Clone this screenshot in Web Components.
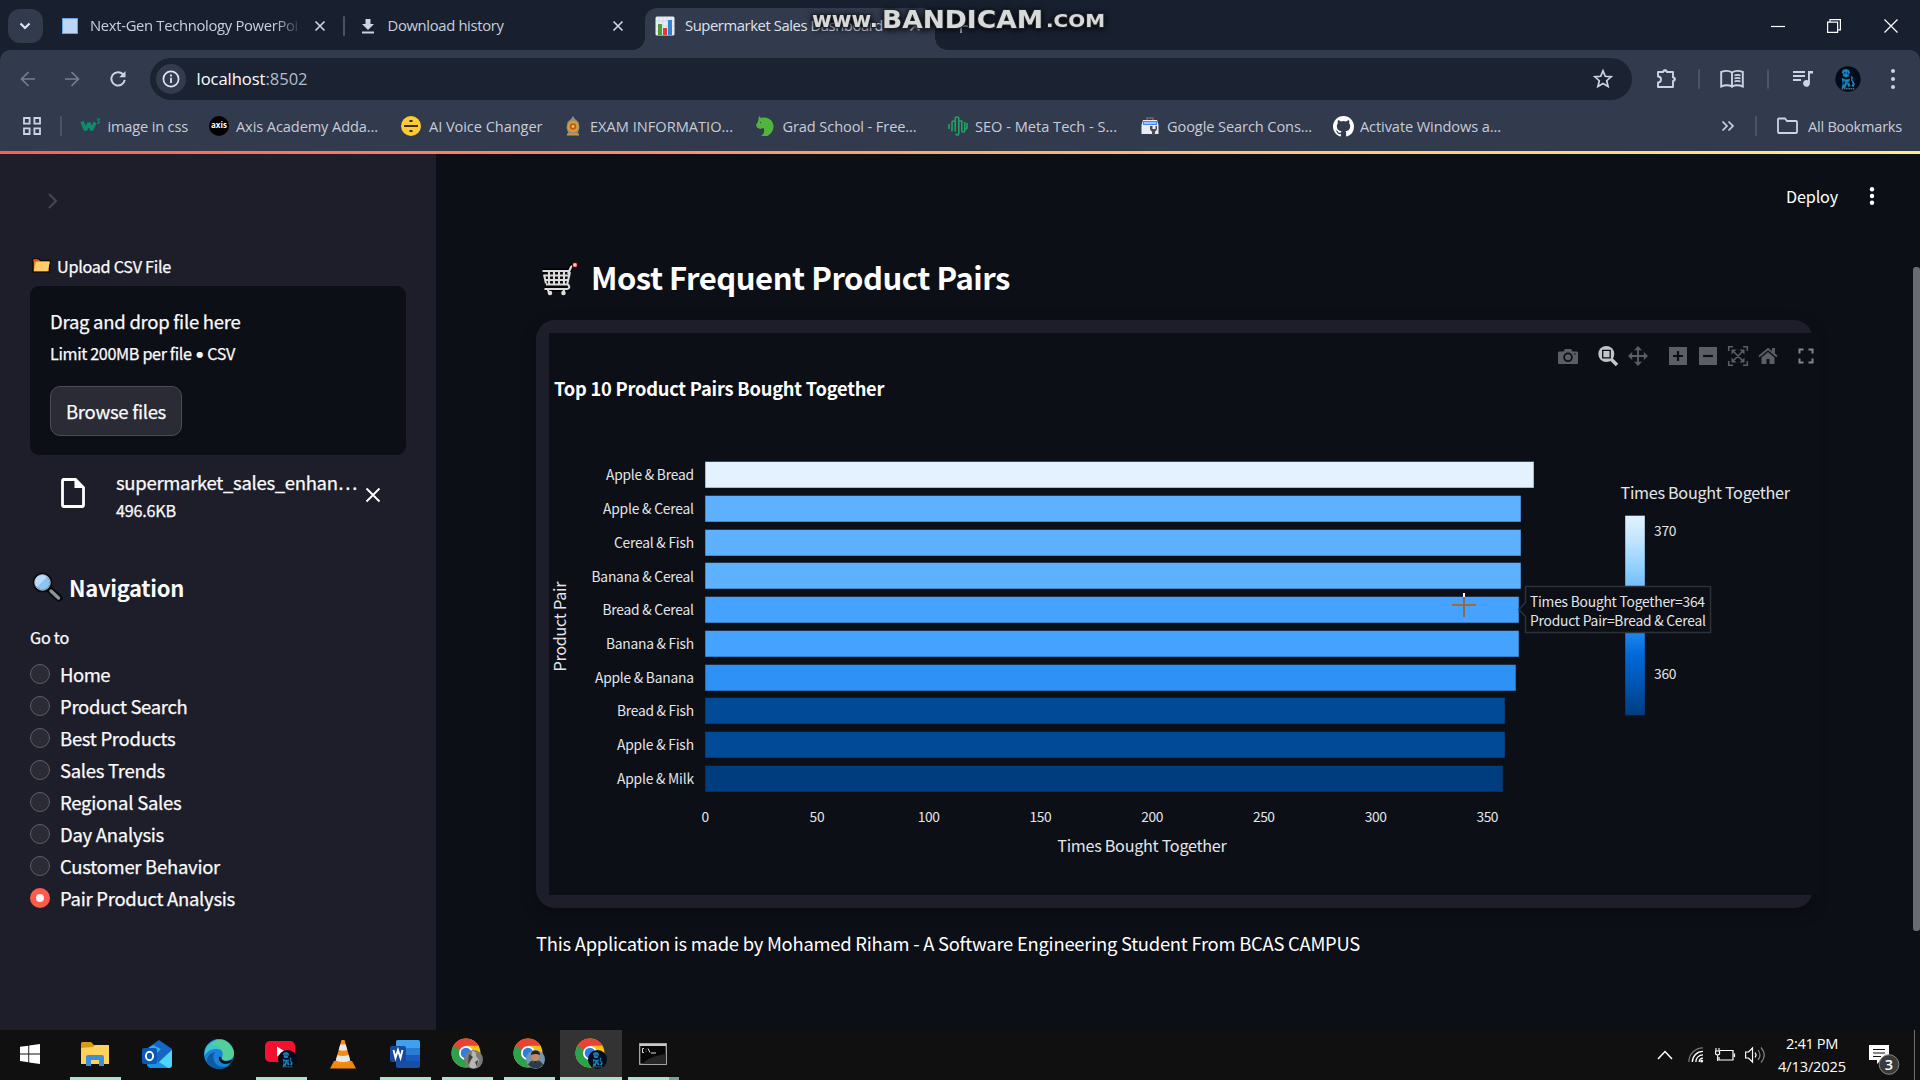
<!DOCTYPE html>
<html lang="en">
<head>
<meta charset="utf-8">
<title>Supermarket Sales Dashboard</title>
<style>
html,body{margin:0;height:100%;background:#0c0f16;overflow:hidden}
</style>
</head>
<body>
<desktop-screen></desktop-screen>
<script>
const SRC = '"Noto Sans CJK SC","Noto Sans",sans-serif';
const SEG = '"Open Sans","Noto Sans",sans-serif';

/* Icons: [width, height, markup] */
const lion = (x, y, r) => `<g transform="translate(${x} ${y}) scale(${r / 12})"><circle r="12" fill="#030c18"/><path d="M-5-8.500l3-1 3 1 1 3-1.500 1 .5 2-3 1-3-1.500.5-2-1.500-1zM-6-1l4 1.500L2 0l-1 3 1.500 3.500-2 1-1.500-3-1.500 4H-6l1-4zM3-3l2 1.500-.5 3 2 3-1 3-2.500-1 1.500-2-1.500-3z" fill="#1583c2"/><path d="M-4-6.500l2 .5-1 1.500zM-1-7l1.500 2-1.500.500zM-4 1.500l1.500 1-1 3-1-.5zM0 2l1 1.500-1.500.500zM4-1l.8 2-1 .5z" fill="#05213b"/><path d="M-6 9.300H6" stroke="#8aa3b5" stroke-width=".9" stroke-dasharray="1.500 .6"/></g>`;
const chrome = `<circle cx="15" cy="15" r="14.500" fill="#fbc116"/><path d="M15 15L2.400 7.800A14.500 14.500 0 0 1 27.600 7.800H15z" fill="#ea4335"/><path d="M2.400 7.800A14.500 14.500 0 0 0 15 29.500l6.200-10.900L15 15z" fill="#2ba24c"/><path d="M2.400 7.800l6.400 10.800L15 15 15 7.800z" fill="#ea4335"/><path d="M2.400 7.800L8.800 18.600 15 15z" fill="#2ba24c"/><circle cx="15" cy="15" r="7" fill="#fff"/><circle cx="15" cy="15" r="5.300" fill="#2f7de1"/>`;
const ICONS = {
 tabchev:[34,34,`<path d="M12.500 14.500l4.500 4.500 4.500-4.500" fill="none" stroke="#e1e5ee" stroke-width="2.200"/>`],
 page:[16,16,`<rect x=".5" y=".5" width="15" height="15" fill="#bcd7f5" stroke="#6ba3e0"/>`],
 x:[12,12,`<path d="M1.500 1.500l9 9m0-9l-9 9" stroke="#cdd3df" stroke-width="1.700"/>`],
 download:[14,16,`<path d="M4.500 1h5v5H13L7 12 1 6h3.500z" fill="#ccd3e3"/><path d="M1 14.500h12" stroke="#ccd3e3" stroke-width="2"/>`],
 chart:[20,20,`<rect x=".5" y=".5" width="19" height="19" rx="1.500" fill="#e9eef2"/><path d="M4 1v18M8 1v18M12 1v18M16 1v18M1 5h18M1 10h18M1 15h18" stroke="#c6d2db" stroke-width=".6"/><path d="M3 8h4v11H3z" fill="#4e9a3b"/><path d="M8 12h4v7H8z" fill="#d93a3a"/><path d="M13 4h4v15h-4z" fill="#3184cf"/>`],
 plus:[14,14,`<path d="M7 0v14M0 7h14" stroke="#aab1bf" stroke-width="1.800"/>`],
 min:[14,14,`<path d="M0 7.500h14" stroke="#fff" stroke-width="1.200"/>`],
 restore:[14,14,`<path d="M.6 3.100h10v10.300H.6zM3 3V.6h10.400v10.300H11" fill="none" stroke="#fff" stroke-width="1.200"/>`],
 close:[14,14,`<path d="M.5.5l13 13m0-13l-13 13" stroke="#fff" stroke-width="1.200"/>`],
 back:[18,18,`<path d="M16 9H3m6.500-7L2.500 9l7 7" fill="none" stroke="#767d90" stroke-width="1.700"/>`],
 fwd:[18,18,`<path d="M2 9h13M8.500 2l7 7-7 7" fill="none" stroke="#767d90" stroke-width="1.700"/>`],
 reload:[18,18,`<path d="M15.700 9.800A6.700 6.700 0 1 1 14 4.300L15.500 6" fill="none" stroke="#ccd3e3" stroke-width="2"/><path d="M16.500 1v6.300H10.200z" fill="#ccd3e3"/>`],
 info:[30,30,`<circle cx="15" cy="15" r="15" fill="#333b4e"/><circle cx="15" cy="15" r="7.600" fill="none" stroke="#dfe4ee" stroke-width="1.700"/><path d="M15 13.800v5.200M15 10.500v2" stroke="#dfe4ee" stroke-width="1.800"/>`],
 star:[20,20,`<path d="M10 1.800l2.300 5.500 5.900.5-4.500 3.900 1.400 5.800L10 14.400l-5.100 3.100 1.400-5.800L1.800 7.800l5.900-.5z" fill="none" stroke="#ccd3e3" stroke-width="1.700"/>`],
 ext:[22,22,`<path d="M3 4h5.200a1.800 1.800 0 0 1 3.600 0H18v5.400a1.800 1.800 0 0 1 0 3.600v6H3v-4.500a3 3 0 0 0 0-6z" fill="none" stroke="#ccd3e3" stroke-width="1.900" stroke-linejoin="round"/><path d="M8 3.500a2 2 0 0 1 4 0zM18.500 9.200a2 2 0 0 1 0 4z" fill="#ccd3e3"/>`],
 book:[24,20,`<path d="M12 17.500C9 16 5 16 1.200 17.500V3C5 1.500 9 1.500 12 3.500zM12 17.500C15 16 19 16 22.800 17.500V3C19 1.500 15 1.500 12 3.500z" fill="none" stroke="#ccd3e3" stroke-width="1.900"/><path d="M14.500 6.500c2-.8 4-.8 6 0M14.500 9.500c2-.8 4-.8 6 0M14.500 12.500c2-.8 4-.8 6 0" fill="none" stroke="#ccd3e3" stroke-width="1.700"/>`],
 music:[20,18,`<path d="M0 2h12M0 6h12M0 10h8" stroke="#ccd3e3" stroke-width="1.900"/><path d="M20 1h-5v9.300a3.400 3.400 0 1 0 1.900 3V3.500H20z" fill="#ccd3e3"/>`],
 avatar:[26,30,lion(13,15,12.7)],
 dots:[6,22,`<g fill="#ccd3e3"><circle cx="3" cy="3" r="2"/><circle cx="3" cy="11" r="2"/><circle cx="3" cy="19" r="2"/></g>`],
 ddots:[6,22,`<g fill="#fff"><circle cx="3" cy="4.200" r="2.200"/><circle cx="3" cy="11" r="2.200"/><circle cx="3" cy="17.800" r="2.200"/></g>`],
 grid:[18,18,`<path d="M1 1h5.600v5.600H1zM11.400 1H17v5.600h-5.600zM1 11.400h5.600V17H1zM11.400 11.400H17V17h-5.600z" fill="none" stroke="#ccd3e3" stroke-width="1.800"/>`],
 w3:[22,18,`<path d="M2 4.500l3.500 8.500 3.500-7 2.500 7 3.500-7.500" fill="none" stroke="#0c8f68" stroke-width="3.400" stroke-linejoin="bevel"/><path d="M17 2h2.600l-1.500 2c2.100.2 1.900 2.800-1.100 2.300" fill="none" stroke="#0c8f68" stroke-width="1.100"/>`],
 ai:[20,20,`<circle cx="10" cy="10" r="10" fill="#fdcb35"/><path d="M3 10h14M8.500 5h3M8.500 15h3" stroke="#3a2d12" stroke-width="2"/>`],
 exam:[18,20,`<path d="M9 0l2 3 3.500 3 1 6-2 6h-9l-2-6 1-6L7 3z" fill="#8d8f83"/><circle cx="9" cy="10.500" r="5.500" fill="#d9a12c"/><circle cx="9" cy="10.500" r="3.300" fill="#c4571d"/><circle cx="9" cy="10.500" r="1.400" fill="#f1c84a"/><path d="M3 18.500h12" stroke="#c99b38" stroke-width="2"/>`],
 horse:[18,20,`<path d="M3 0l2 2c8-2 13 4 12.500 9-.3 4-2.500 7-6 9H5c3-2 4-5 2.500-8L4 13l-3-1.500L0 9l2-3.500z" fill="#52b43c"/><path d="M4 6l1.500.500L4 7.500z" fill="#1d4a18"/>`],
 seo:[20,20,`<path d="M1 8v5M4 6.500v9M4 6.500q0-1.500 1.600-1.500T7.200 6.500v9M7.200 6V2.500Q7.200 1 9 1t1.800 1.500v15q0 1.500-1.500 1.500T7.800 17.500M10.800 5h3v9.500q0 1.500 1.500 1.500t1.500-1.500V6M19 7v5q0 1-1.500 1.200" fill="none" stroke="#1fa463" stroke-width="1.600"/>`],
 gsc:[18,18,`<path d="M6 3V1h6v2" fill="none" stroke="#676c74" stroke-width="1.600"/><path d="M2 3h14l1.500 5v9H.5V8z" fill="#e9ecf0"/><path d="M2 4h14v4H2z" fill="#4285f4"/><path d="M3 6h12" stroke="#fff" stroke-width="1"/><path d="M9 9v3a3 3 0 0 0 2 2.500V18h3v-3.500A3 3 0 0 0 16 12V9h-1.500v3h-3V9z" fill="#4a4d52"/>`],
 github:[21,21,`<path transform="scale(1.3125)" d="M8 0C3.580 0 0 3.580 0 8c0 3.540 2.290 6.530 5.470 7.590.4.070.55-.17.55-.38 0-.19-.01-.82-.01-1.490-2.010.37-2.530-.49-2.690-.94-.09-.23-.48-.94-.82-1.130-.28-.15-.68-.52-.01-.53.63-.01 1.080.58 1.230.82.72 1.210 1.870.87 2.330.66.07-.52.28-.87.51-1.070-1.780-.2-3.640-.89-3.640-3.950 0-.87.31-1.590.82-2.150-.08-.2-.36-1.020.08-2.120 0 0 .67-.21 2.200.82a7.700 7.700 0 0 1 4 0c1.530-1.040 2.200-.82 2.200-.82.44 1.100.16 1.920.08 2.120.51.56.82 1.270.82 2.150 0 3.070-1.870 3.750-3.650 3.950.29.25.54.73.54 1.480 0 1.070-.01 1.930-.01 2.200 0 .21.15.46.55.38A8 8 0 0 0 16 8c0-4.420-3.580-8-8-8z" fill="#fff"/>`],
 more:[14,12,`<path d="M1.500 1.500L6 6l-4.500 4.500M7.500 1.500L12 6l-4.500 4.500" fill="none" stroke="#ccd3e3" stroke-width="1.700"/>`],
 folder:[21,18,`<path d="M1 2.500q0-1 1-1h6l2 2.500h9q1 0 1 1v10q0 1-1 1H2q-1 0-1-1z" fill="none" stroke="#ccd3e3" stroke-width="1.800"/>`],
 sidechev:[10,16,`<path d="M1 1l7 7-7 7" fill="none" stroke="#454651" stroke-width="2"/>`],
 emofolder:[20,16,`<path d="M1 1h6l1.500 1.500H18L17.500 14H1z" fill="#e68a1b" stroke="#110c05" stroke-width="1.500"/><path d="M1.300 1.300h4.500L7 3.500H1.300z" fill="#e8541d"/><path d="M4 3.800h14l-2.500 9.500H1.700z" fill="#ffce6b"/>`],
 file:[24,30,`<path d="M2 1.500h12.500l8 8V27q0 1.500-1.500 1.500H3q-1.500 0-1.500-1.500V3Q1.500 1.500 3 1.500z" fill="none" stroke="#fff" stroke-width="2.800"/><path d="M13.500 1.500v8.500h9z" fill="#fff"/>`],
 bigx:[16,16,`<path d="M1.500 1.500l13 13m0-13l-13 13" stroke="#fff" stroke-width="1.900"/>`],
 lens:[30,30,`<path d="M16 16l10 9" stroke="#07080c" stroke-width="7" stroke-linecap="round"/><path d="M18 18l7.500 7" stroke="#8b959a" stroke-width="3.500" stroke-linecap="round"/><circle cx="9.500" cy="9.500" r="8.500" fill="#8cc4f5" stroke="#07080c" stroke-width="2.600"/><circle cx="9.500" cy="9.500" r="7.700" fill="none" stroke="#cfe6f8" stroke-width="1"/><path d="M4 14L14 4a7 7 0 0 0-10 10z" fill="#b9dcfa"/>`],
 cart:[40,40,`<g fill="none" stroke="#000" stroke-width="5"><path d="M3 11h26l4-7M5 13l4 14M9 24h19M5 29h25M10 30v4m14-4v4"/></g><path d="M3.500 11.500h26.500L27 24H8z" fill="#0a0a0c"/><path d="M2.500 11H30M4 14.500l2 9M9 11v13M14 11v13M19 11v13M24 11v13M5 15.500h24M6 20h22M6 24.500h21M28 24.500q3 4-1 4.500H4.500M7.500 28.500L9 33M24.500 28.500L23 33M30 12l-3 13M28 14l3-7 3.500-2.500" fill="none" stroke="#dcdcdc" stroke-width="2.100"/><circle cx="10" cy="33" r="2.300" fill="#ddd"/><circle cx="23.500" cy="33" r="2.300" fill="#ddd"/><circle cx="35" cy="5" r="2.800" fill="#f0705a" stroke="#300" stroke-width="1"/><circle cx="34.800" cy="4.800" r="1.500" fill="#f6c6bb"/>`],
 camera:[20,16,`<path d="M1 3.500h4.500L7 1h6l1.500 2.500H19a1 1 0 0 1 1 1V15a1 1 0 0 1-1 1H1a1 1 0 0 1-1-1V4.500a1 1 0 0 1 1-1z" fill="#5c5e65"/><circle cx="10" cy="9.300" r="3.900" fill="none" stroke="#0c0f16" stroke-width="1.800"/><circle cx="17" cy="6" r=".8" fill="#0c0f16"/>`],
 mzoom:[20,20,`<circle cx="8.300" cy="8" r="8" fill="#c4c5c8"/><path d="M13 13l6 6" stroke="#c4c5c8" stroke-width="3.600"/><path d="M4.700 4.300h7.500v7.500H4.700z" fill="#c4c5c8" stroke="#0c0f16" stroke-width="1.300"/>`],
 pan:[20,20,`<path d="M10 2v16M2 10h16" stroke="#5c5e65" stroke-width="1.900"/><path d="M10 0l4 4.200H6zM10 20l4-4.200H6zM0 10l4.200-4v8zM20 10l-4.200-4v8z" fill="#5c5e65"/>`],
 zin:[18,18,`<path d="M0 0h18v18H0z" fill="#5c5e65"/><path d="M9 4v10M4 9h10" stroke="#0c0f16" stroke-width="2.200"/>`],
 zout:[18,18,`<path d="M0 0h18v18H0z" fill="#5c5e65"/><path d="M4 9h10" stroke="#0c0f16" stroke-width="2.200"/>`],
 auto:[20,20,`<path d="M.7 5V.7H5M15 .7h4.300V5M19.300 15v4.300H15M5 19.300H.7V15M5.500 5.500l9 9m0-9l-9 9" fill="none" stroke="#5c5e65" stroke-width="1.500"/><path d="M3.500 3.500h5l-5 5zM16.500 3.500h-5l5 5zM3.500 16.500h5l-5-5zM16.500 16.500h-5l5-5z" fill="#5c5e65"/>`],
 home:[20,18,`<path d="M1 9.500L10 2l9 7.500" fill="none" stroke="#5c5e65" stroke-width="1.900"/><path d="M14 1h3v6l-3-2.500zM3.500 10.500L10 5l6.500 5.500V17h-5v-5h-3v5h-5z" fill="#5c5e65"/>`],
 full:[16,16,`<path d="M1.500 5.500v-4h4M10.500 1.500h4v4M14.500 10.500v4h-4M5.500 14.500h-4v-4" fill="none" stroke="#85868b" stroke-width="2"/>`],
 win:[20,20,`<path d="M0 2.800l8.300-1.100v7.800H0zM9.200 1.600L20 0v9.500H9.200zM0 10.400h8.300v7.800L0 17.100zM9.200 10.400H20V20L9.200 18.400z" fill="#fff"/>`],
 explorer:[28,24,`<path d="M0 1.500q0-1.500 1.500-1.500H10l3 3h15v8H0z" fill="#d69a14"/><path d="M0 6l12-1 2-2h13q1 0 1 1v18H0z" fill="#ffd25e"/><path d="M5 24v-9q0-2 2-2h14q2 0 2 2v9h-5v-6h-8v6z" fill="#3b91d8"/>`],
 outlook:[30,28,`<path d="M3 10L17 0l13 9v3L16 22 3 14z" fill="#1567c4"/><path d="M11 5l8 4-6 6H3v-5z" fill="#35a9ee"/><path d="M30 10v15q0 3-3 3H10z" fill="#4fd4fb"/><path d="M5 14l21 14H9q-3 0-4-3z" fill="#1a8fe6"/><rect y="8" width="15" height="16" rx="2" fill="#0c59b5"/><ellipse cx="7.500" cy="16" rx="3.600" ry="4.200" fill="none" stroke="#fff" stroke-width="2"/>`],
 edge:[30,30,`<circle cx="15" cy="15" r="15" fill="#1782d8"/><path d="M1 11A15 15 0 0 1 30 14c0 5-4 7.500-8 7.500-3 0-5-1.500-4-3 2-3 1-8-4.500-8.500C8 9.500 3 12 .3 17z" fill="#3fc5c7"/><path d="M12 .5A15 15 0 0 1 30 14c0 5-4 7.500-8 7.500-3 0-4-1.500-4-3C20 15 19 5 7 6z" fill="#5bd28a" opacity=".75"/><path d="M11 13c-4 6 0 15 8 15 3 0 6-1 8-3A15 15 0 0 1 3 23C3 17 6 14 11 13z" fill="#0c59a4"/><path d="M17.500 18.500c-1 2 2 4 6 3.500 3-.4 4.500-1.500 5.500-2.500l-2 4c-8 4-13-1-12-6z" fill="#101010"/>`],
 youtube:[32,30,`<rect y="2" width="30" height="21" rx="5" fill="#f3112f"/><path d="M12 7.500l8 5-8 5z" fill="#fff"/>`+lion(22.5,20.5,9.5)],
 vlc:[26,30,`<path d="M4 22h18l4 7.500H0z" fill="#f08708"/><path d="M11.500 1h3L21 24q-8 4-16 0z" fill="#f58b12"/><path d="M10.300 5.500h5.400L17.300 11q-4.300 1.500-8.600 0zM7.300 16q5.700 2 11.400 0l1.500 5.500q-7 3-14.400 0z" fill="#e9e9e9"/>`],
 word:[30,28,`<rect x="6" width="24" height="28" rx="2" fill="#1650a5"/><path d="M6 2q0-2 2-2h20q2 0 2 2v6H6z" fill="#3fa0ee"/><path d="M6 8h24v7H6z" fill="#2b7cd3"/><path d="M6 15h24v6H6z" fill="#185abd"/><rect y="6" width="16" height="16" rx="2" fill="#154a9e"/><path d="M3.500 10l2 8 2.500-8 2.500 8 2-8" fill="none" stroke="#fff" stroke-width="1.900"/>`],
 chromeA:[33,32,chrome+`<circle cx="22.500" cy="21.500" r="9.500" fill="#77797a"/><path d="M21 13q5 0 4 5l3 4-2 7q-5 3-8-1l2-6z" fill="#b8b6b2"/><path d="M18 16l4 3-5 7zM24 24l3-2-1 7z" fill="#3f4340"/>`],
 chromeB:[33,32,chrome+`<circle cx="22.500" cy="21.500" r="9.500" fill="#7895ab"/><path d="M15 27q2-5 7.500-5t7.500 5q-7 7-15 0z" fill="#2b3d4d"/><ellipse cx="22.300" cy="19.500" rx="3.600" ry="5" fill="#c58c63"/><path d="M18 17q0-4.500 4.500-4.500t4.500 4.500q-4-2-9 0zM19.500 22q3 2.500 5.500 0l-2.500 3.500z" fill="#2b201b"/>`],
 chromeC:[33,32,chrome+lion(22.5,21.5,9.5)],
 cmd:[28,22,`<rect x=".7" y=".7" width="26.600" height="20.600" fill="#060606" stroke="#b4b4b4" stroke-width="1.200"/><path d="M1 2h26" stroke="#c9c9c9" stroke-width="2"/><path d="M5 5.500H3.500v4H5M7 6.500v.5M7 8.500v.5M9 5.500l2 4M12 10h5" fill="none" stroke="#ddd" stroke-width="1"/><path d="M4 21q4-7 23-10v10z" fill="#262626"/>`],
 up:[16,10,`<path d="M1 9l7-7.500L15 9" fill="none" stroke="#fff" stroke-width="1.500"/>`],
 wifi:[16,16,`<g fill="none"><path d="M.8 15A14.200 14.200 0 0 1 15 .8" stroke="#777" stroke-width="1.200"/><path d="M4.300 15A10.700 10.700 0 0 1 15 4.300M7.800 15A7.200 7.200 0 0 1 15 7.800M11.200 15a4 4 0 0 1 3.800-3.800" stroke="#fff" stroke-width="1.300"/></g><circle cx="13.700" cy="14" r="1.500" fill="#fff"/>`],
 battery:[21,14,`<path d="M5 2.500h13v9.500H4V9M19.500 5.500v3.500" fill="none" stroke="#fff" stroke-width="1.200"/><path d="M1 0v3M4 0v3M.6 3h4v3q-2 2-4 0zM2.600 7v6" fill="none" stroke="#fff" stroke-width="1.100"/>`],
 speaker:[21,18,`<path d="M.6 6h3L7.500 2v14l-4-4H.6z" fill="none" stroke="#fff" stroke-width="1.200"/><path d="M10 6.500q2 2.500 0 5" fill="none" stroke="#fff" stroke-width="1.200"/><path d="M13 4q4 5 0 10M16 1.500q6.500 7.500 0 15" fill="none" stroke="#888" stroke-width="1.200"/>`],
 notif:[31,32,`<path d="M0 0h20v15h-8l-4 4v-4H0z" fill="#fff"/><path d="M4 4.500h12M4 8h12M4 11.500h8" stroke="#111" stroke-width="1.200"/><circle cx="20" cy="19.500" r="9.800" fill="#3a3a3a" stroke="#858585"/><text x="20" y="25" text-anchor="middle" font-family='${SEG}' font-size="14.500" font-weight="600" fill="#fff">3</text>`]
};

const define = (tag, css, html) => customElements.define(tag, class extends HTMLElement {
  constructor(){ super(); this.attachShadow({mode:'open'}).innerHTML = `<style>:host{display:block}*{box-sizing:border-box}${css}</style>${html}`; }
});

customElements.define('ui-icon', class extends HTMLElement {
  connectedCallback(){
    const [w,h,m] = ICONS[this.getAttribute('name')];
    const s = this.attachShadow({mode:'open'});
    s.innerHTML = `<style>:host{display:block;flex:none;width:${w}px;height:${h}px}svg{display:block;overflow:visible}</style><svg width="${w}" height="${h}" viewBox="0 0 ${w} ${h}">${m}</svg>`;
  }
});

/* Single text line whose tracking is tuned so that it spans the width attribute */
customElements.define('text-line', class extends HTMLElement {
  connectedCallback(){
    const w = +this.getAttribute('w'), n = this.textContent.length;
    this.attachShadow({mode:'open'}).innerHTML = `<style>:host{display:block;flex:none;width:${w}px;white-space:nowrap}span{display:inline-block}</style><span><slot></slot></span>`;
    const sp = this.shadowRoot.querySelector('span');
    const nat = sp.getBoundingClientRect().width;
    sp.style.letterSpacing = ((w - nat) / n).toFixed(4) + 'px';
  }
});

/* Flex row children: each entry is [left edge, width, markup]; gaps become margins */
const row = items => { let at = 0; return items.map(([x,w,m]) => { const g = x - at; at = x + w; return `<div class="c" style="margin-left:${g}px;width:${w}px">${m}</div>`; }).join(''); };
const ic = n => `<ui-icon name="${n}"></ui-icon>`;
const at = (cx, n) => [cx - ICONS[n][0] / 2, ICONS[n][0], ic(n)];
const tx = (x, w, t) => [x, w, `<text-line w="${w}">${t}</text-line>`];
const sep = x => [x-1, 2, `<i class="sep"></i>`];
const ROW = `.r{display:flex;align-items:center}.c{flex:none}.sep{display:block;width:2px;height:20px;background:#4b5367;border-radius:1px}`;

define('tab-strip', `:host{height:50px;background:#18202f;color:#c9cfdb;font:14.800px/20px ${SEG}}
.bar{display:flex;height:50px;align-items:stretch}
${ROW}.r{height:42px;padding-bottom:7px}text-line{margin-top:-2px}
.rest,.act,.end{margin-top:8px}
.dd{width:35px;height:34px;border-radius:12px;background:#323a4d}
.rest{width:645px}.act{width:290px;height:42px;background:#323a4d;border-radius:12px 12px 0 0;color:#dde2ec;position:relative}
.act::before,.act::after{content:"";position:absolute;bottom:0;width:12px;height:12px}
.act::before{left:-12px;background:radial-gradient(circle at 0 0,transparent 11.500px,#323a4d 12px)}
.act::after{right:-12px;background:radial-gradient(circle at 100% 0,transparent 11.500px,#323a4d 12px)}
.fade{width:210px;overflow:hidden;-webkit-mask:linear-gradient(90deg,#000 185px,transparent 212px)}
.end{width:985px}`,
`<div class="bar"><div class="rest"><div class="r">${row([[8,35,`<div class="dd">${ic('tabchev')}</div>`],at(70,'page'),[90,210,`<div class="fade"><text-line w="208">Next-Gen Technology PowerPoi</text-line></div>`],at(320,'x'),sep(344),at(368,'download'),tx(387.5,116,'Download history'),at(617.5,'x')])}</div></div>
<div class="act"><div class="r">${row([at(20,'chart'),tx(40,198,'Supermarket Sales Dashboard'),at(270,'x')])}</div></div>
<div class="end"><div class="r">${row([at(26,'plus'),at(842.5,'min'),at(898.5,'restore'),at(956,'close')])}</div></div></div>`);

define('tool-bar', `:host{height:50px;background:#18202f;color:#fff;font:16.600px/24px ${SEG}}
.bar{height:100%;background:#323a4d;border-radius:10px 10px 0 0;padding-top:8px;display:flex}
${ROW}.r{height:42px}.omni{width:1482px;margin-left:16px;border-radius:21px;background:#1b2333}.nav{width:134px}.sep{height:20px}`,
`<div class="bar"><div class="nav r">${row([at(27.5,'back'),at(72,'fwd'),at(117.5,'reload')])}</div>
<div class="omni r">${row([at(21,'info'),[46.5,111,`<text-line w="111">localhost<span style="color:#b4bbca">:8502</span></text-line>`],at(1452.5,'star')])}</div>
<div class="r">${row([at(34,'ext'),sep(67),at(100,'book'),sep(136),at(170.5,'music'),at(215.5,'avatar'),at(260.5,'dots')])}</div></div>`);

define('bookmark-bar', `:host{height:51px;background:#323a4d;color:#c7ccd8;font:14.600px/20px ${SEG}}${ROW}.r{height:52px}
.axis{width:20px;height:20px;border-radius:50%;background:#000;color:#fff;font:bold 8px/18px "Open Sans",sans-serif;display:flex;justify-content:center}`,
`<div class="r">${row([at(32,'grid'),sep(61),[80,22,ic('w3')],tx(107.5,80.5,'image in css'),[209,20,`<div class="axis"><text-line w="16">axis</text-line></div>`],tx(236,142,'Axis Academy Adda...'),at(411,'ai'),tx(429,113.5,'AI Voice Changer'),at(573,'exam'),tx(590,143,'EXAM INFORMATIO...'),at(765,'horse'),tx(782.5,134,'Grad School - Free...'),at(958,'seo'),tx(975,142,'SEO - Meta Tech - S...'),at(1150,'gsc'),tx(1167,145,'Google Search Cons...'),at(1343,'github'),tx(1360,141,'Activate Windows a...'),at(1727.5,'more'),sep(1756),at(1787.5,'folder'),tx(1808,94,'All Bookmarks')])}</div>`);

customElements.define('radio-item', class extends HTMLElement {
  connectedCallback(){
    const on = this.hasAttribute('checked');
    this.attachShadow({mode:'open'}).innerHTML = `<style>:host{display:flex;align-items:center;gap:10px;height:32px}
    i{box-sizing:border-box;width:20px;height:20px;border-radius:50%;background:${on?'#f6f3f8':'#2b2b36'};border:${on?'6px solid #ff5b49':'1px solid #5d5d68'}}</style><i></i><slot></slot>`;
  }
});

const NAV = [['Home',50],['Product Search',127.5],['Best Products',115.5],['Sales Trends',105],['Regional Sales',121.5],['Day Analysis',104],['Customer Behavior',160],['Pair Product Analysis',175]];
define('side-bar', `:host{width:436px;height:876px;background:#1e1e2a;color:#fafafa;font:18.500px/24px ${SRC};padding:0 30px;box-sizing:border-box;-webkit-text-stroke:.25px currentColor}
.s{font-size:16.200px;line-height:20px}.r{display:flex}
.chev{padding:39px 0 0 18px;height:101px}.lab{height:31px;gap:5px;padding-left:2px}.lab ui-icon{margin-top:3px}.lab text-line{margin-top:1px}
.drop{height:169px;border-radius:9px;background:#0c0f16;padding:23px 20px 0}
.drop .s{margin-top:10px}.btn{margin-top:22px;width:132px;height:50px;border:1px solid #4b4b55;border-radius:10px;background:#2b2b36;padding:12px 15px}
.file{padding:15px 25px 0 31px;height:112px}.file ui-icon:first-child{margin-top:8px}.fn{margin-left:31px;width:241px}.file ui-icon:last-child{margin:17px 0 0 8px}
.fn .s{margin-top:6px}.b{font-family:"Open Sans",sans-serif}
.nav{height:53px;font-weight:700;font-size:22px;line-height:30px;padding-left:3px;-webkit-text-stroke:0}.nav text-line{margin:5px 0 0 6px}.nav ui-icon{margin-top:6px}
.go{padding-top:7px;height:38px}radio-item text-line{margin-top:-1px}`,
`<div class="chev">${ic('sidechev')}</div>
<div class="r lab">${ic('emofolder')}<text-line class="s" w="114">Upload CSV File</text-line></div>
<div class="drop"><text-line w="190.500">Drag and drop file here</text-line><text-line class="s" w="185">Limit 200MB per file <span style="font-family:Lato,sans-serif">•</span> CSV</text-line><div class="btn"><text-line w="100">Browse files</text-line></div></div>
<div class="r file">${ic('file')}<div class="fn"><text-line w="241">supermarket_sales_enhan…</text-line><text-line class="s" w="60">496.6KB</text-line></div>${ic('bigx')}</div>
<div class="r nav">${ic('lens')}<text-line w="115">Navigation</text-line></div>
<div class="go"><text-line class="s" w="39">Go to</text-line></div>
${NAV.map(([t,w],i)=>`<radio-item${i==7?' checked':''}><text-line w="${w}">${t}</text-line></radio-item>`).join('')}`);

/* Chart: coordinates are relative to the plot's own top-left corner */
const BARS = [['Apple & Bread',829,'#e3f2fe',88],['Apple & Cereal',816,'#5db1ff',91],['Cereal & Fish',816,'#5db1ff',80],['Banana & Cereal',816,'#5db1ff',102.5],['Bread & Cereal',814,'#45a2ff',91.5],['Banana & Fish',814,'#45a2ff',88],['Apple & Banana',811,'#2d91f5',99],['Bread & Fish',800,'#004a98',77],['Apple & Fish',800,'#004a98',77],['Apple & Milk',798,'#003d7f',77]];
const st = (x,y,w,t,a='start',more='') => `<text x="${x}" y="${y}" text-anchor="${a}" textLength="${w}" ${more}>${t}</text>`;
define('pair-chart', `:host{width:1271px;height:562px;background:#0c0f16}svg{display:block}text{font-family:${SRC};fill:#e4e6ea;font-size:13.800px}.t{font-size:16.200px}.h{font-size:18.300px;font-weight:700;fill:#fff}`,
`<svg width="1271" height="562"><defs><linearGradient id="g" x1="0" y1="0" x2="0" y2="1"><stop offset="0" stop-color="#e3f2fe"/><stop offset=".13" stop-color="#bfe4fe"/><stop offset=".25" stop-color="#95d1fe"/><stop offset=".38" stop-color="#6ab9ff"/><stop offset=".5" stop-color="#3d9dff"/><stop offset=".6" stop-color="#1c83ec"/><stop offset=".7" stop-color="#0068d8"/><stop offset=".85" stop-color="#0054b0"/><stop offset="1" stop-color="#003d7f"/></linearGradient></defs>
${st(5,63,330.5,'Top 10 Product Pairs Bought Together','start','class="h"')}
${BARS.map(([t,w,c,tw],i)=>{const y=128.3+i*33.73;return `<rect x="156" y="${Math.round(y)+.5}" width="${w}" height="26.500" fill="${c}" stroke="#0c0f16" stroke-opacity=".5"/>`+st(145,(y+19).toFixed(1),tw,t.replace('&','&amp;'),'end')}).join('')}
${[0,50,100,150,200,250,300,350].map((v,i)=>st((156.3+i*111.75).toFixed(1),489,[7.3,15,22][String(v).length-1],v,'middle')).join('')}
${st(593,519,169.5,'Times Bought Together','middle','class="t"')}
<g transform="translate(17 293.500) rotate(-90)">${st(0,0,90,'Product Pair','middle','class="t"')}</g>
${st(1071.5,166,169.5,'Times Bought Together','start','class="t"')}
<rect x="1076" y="182.500" width="20" height="200" fill="url(#g)" stroke="#0c0f16" stroke-opacity=".4"/>
${st(1105,202.5,22.5,'370')}${st(1105,345.5,22.5,'360')}
<path d="M970 276.500l6.500-7V253.500h185v46h-185v-16z" fill="#0c0f16" stroke="#2c3037" stroke-width="1.500"/>
${st(981,273.5,175,'Times Bought Together=364')}${st(981,292.5,176,'Product Pair=Bread &amp; Cereal')}
<path d="M903 272h24" stroke="#a8682f" stroke-width="2"/><path d="M915 260v24" stroke="#8a6b55" stroke-width="2"/><path d="M915 260v4" stroke="#fff" stroke-width="2"/></svg>`);

define('mode-bar', `:host{position:absolute;left:0;top:12px;width:1271px}${ROW}.r{height:22px}`,
`<div class="r">${row([at(1019,'camera'),at(1059,'mzoom'),at(1089,'pan'),at(1129,'zin'),at(1159,'zout'),at(1189,'auto'),at(1219,'home'),at(1256.5,'full')])}</div>`);

define('main-view', `:host{width:1484px;height:876px;background:#0c0f16;color:#fff;font:18.400px/24px ${SRC};display:flex}
.m{width:1477px}.top{display:flex;justify-content:flex-end;gap:31px;padding:30px 38px 0 0;height:100px;font-size:16.200px}.top ui-icon{margin-top:1px}
h1{margin:0;display:flex;height:66px;padding-left:104px;gap:11px;font:700 31px/44px ${SRC}}h1 ui-icon{margin-top:6px}h1 text-line{margin-top:1px}
.card{margin-left:100px;width:1277px;height:588px;border-radius:19px;background:#1e1e2a;padding:13px 0 13px 13px;box-shadow:0 5px 16px rgba(0,0,0,.3)}
.plot{position:relative;width:1271px}.foot{margin:23px 0 0 100px}
.sb{margin-top:113px;width:7px;height:664px;background:#6b6b72;border-radius:3px}`,
`<div class="m"><div class="top"><text-line w="52">Deploy</text-line>${ic('ddots')}</div>
<h1>${ic('cart')}<text-line w="419">Most Frequent Product Pairs</text-line></h1>
<div class="card"><div class="plot"><pair-chart></pair-chart><mode-bar></mode-bar></div></div>
<div class="foot"><text-line w="824">This Application is made by Mohamed Riham - A Software Engineering Student From BCAS CAMPUS</text-line></div></div><div class="sb"></div>`);

const APPS=[['win',0],['explorer',51],['outlook',0],['edge',0],['youtube',51],['vlc',0],['word',51],['chromeA',51],['chromeB',51],['chromeC',62],['cmd',51]];
define('task-bar', `:host{height:50px;background:#101010;color:#fff;font:14.600px/23px ${SEG}}
.bar{display:flex;height:50px}.app{flex:none;width:62px;height:50px;display:flex;flex-direction:column;align-items:center;justify-content:space-between}
.app div{flex:1;display:flex;align-items:center}.app i{height:3px;background:#a5e4cd}.on{background:#333}
.app:first-child{width:64px;padding-right:4px}
.app:last-child i{background:linear-gradient(90deg,#a5e4cd 41px,#76a595 41px)}
.apps{display:flex;width:684px}${ROW}.r{margin-left:-3px}.edge{width:1px;height:50px;background:#6f6f6f}`,
`<div class="bar"><div class="apps">${APPS.map(([n,u],i)=>`<div class="app${i==9?' on':''}"><div>${ic(n)}</div><i style="width:${u}px"></i></div>`).join('')}</div>
<div class="r">${row([at(984,'up'),at(1015,'wifi'),at(1044.5,'battery'),at(1074.5,'speaker'),[1097,68,`<div style="padding-left:8px"><text-line w="52">2:41 PM</text-line></div><text-line w="68">4/13/2025</text-line>`],[1188,31,`<div style="padding-top:12px">${ic('notif')}</div>`],[1233,1,`<div class="edge"></div>`]])}</div></div>`);

define('recorder-mark', `:host{position:absolute;left:806px;top:0}svg{display:block;filter:drop-shadow(0 1px 3px #000)}text{font-family:"DejaVu Sans",sans-serif;font-weight:700;fill:#d8dada;stroke:#20242b;stroke-width:2;paint-order:stroke}`,
`<svg width="310" height="42"><text x="6" y="27" font-size="22" textLength="66" lengthAdjust="spacingAndGlyphs">www.</text><text x="76" y="28" font-size="25" textLength="161" lengthAdjust="spacingAndGlyphs">BANDICAM</text><text x="240" y="27" font-size="18" textLength="59" lengthAdjust="spacingAndGlyphs">.COM</text></svg>`);

define('desktop-screen', `:host{position:relative;width:1920px;height:1080px;overflow:hidden;background:#0c0f16}.line{height:3px;background:linear-gradient(90deg,#ff5f50,#ff9060 35%,#ffc474 65%,#fbf07c)}.body{display:flex}`,
`<tab-strip></tab-strip><tool-bar></tool-bar><bookmark-bar></bookmark-bar><div class="line"></div><div class="body"><side-bar></side-bar><main-view></main-view></div><task-bar></task-bar><recorder-mark></recorder-mark>`);
</script>
</body>
</html>
